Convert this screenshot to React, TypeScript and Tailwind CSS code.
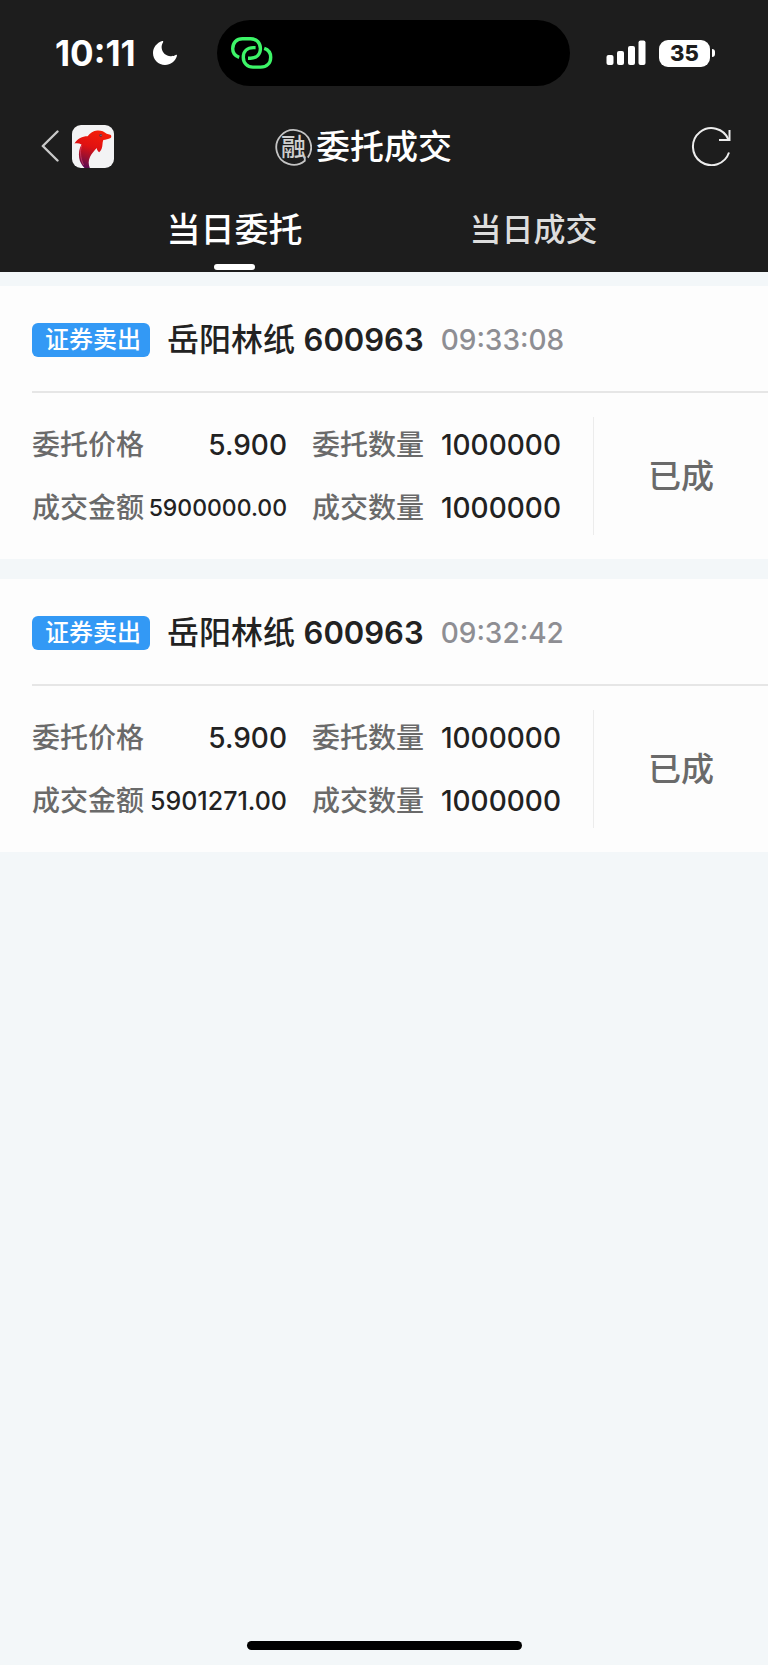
import React, { useState } from "react";

type Order = {
  side: string;
  name: string;
  code: string;
  time: string;
  price: string;
  amount: string;
  orderQty: string;
  dealQty: string;
  status: string;
};

const orders: Order[] = [
  {
    side: "证券卖出",
    name: "岳阳林纸",
    code: "600963",
    time: "09:33:08",
    price: "5.900",
    amount: "5900000.00",
    orderQty: "1000000",
    dealQty: "1000000",
    status: "已成",
  },
  {
    side: "证券卖出",
    name: "岳阳林纸",
    code: "600963",
    time: "09:32:42",
    price: "5.900",
    amount: "5901271.00",
    orderQty: "1000000",
    dealQty: "1000000",
    status: "已成",
  },
];

const tabs = ["当日委托", "当日成交"];

const StatusBar = () => (
  <div className="relative flex h-[106px] items-center justify-between pl-[55px] pr-[53px]">
    <div className="flex items-center gap-4">
      <span className="text-[35px] leading-[40px] font-bold">10:11</span>
      <svg width="26" height="26" viewBox="0 0 26 26" fill="#fff">
        <path d="M10.2 1.1C11 .8 11.6 1.5 11.1 2.3C9.9 4.2 9.4 6.1 9.7 8.3C10.4 13 14 16.1 18.6 16.2C20.4 16.3 22.2 15.8 23.7 15C24.5 14.6 25.2 15.2 24.9 16C23.2 21.4 18.6 25 13 25C6.3 25 1 19.8 1 13.1C1 7.6 4.8 2.9 10.2 1.1Z" />
      </svg>
    </div>

    {/* dynamic island */}
    <div className="absolute left-[217px] right-[198px] top-5 flex h-[66px] items-center rounded-full bg-black pl-[13px]">
      <svg width="43" height="34" viewBox="0 0 43 34" fill="none" stroke="#3df568" strokeWidth="3.4">
        <path d="M9.2 21.4C5.2 20 2.7 16.8 2.7 12.8C2.7 6.8 6.6 2.7 12.5 2.7H20.5C26.6 2.7 30.4 6.8 30.4 12.4C30.4 18.3 26.5 22.2 20.5 22.2H18" />
        <path d="M25.6 11.6H23.3C17.3 11.6 13.3 15.4 13.3 21.2C13.3 27 17.3 31.1 23 31.1H30.6C36.7 31.1 40.7 27.2 40.7 21.2C40.7 17 38.2 13.6 34.2 12.3" />
      </svg>
    </div>

    <div className="flex items-center gap-3">
      <svg width="41" height="26" viewBox="0 0 41 26" fill="#fff">
        <rect x="0.5" y="15" width="7" height="10" rx="2" />
        <rect x="11" y="11" width="7" height="14" rx="2" />
        <rect x="22" y="6" width="7" height="19" rx="2" />
        <rect x="32.5" y="0.5" width="7" height="24.5" rx="2" />
      </svg>
      <div className="flex items-center gap-0.5">
        <span className="flex h-[27px] w-[51px] items-center justify-center rounded-[9px] bg-white text-[22px] leading-[27px] font-extrabold text-[#1d1d1d]">
          35
        </span>
        <span className="h-2 w-[3px] rounded-r-full bg-white" />
      </div>
    </div>
  </div>
);

const DolphinLogo = () => (
  <svg width="42" height="43" viewBox="0 0 42 43">
    <defs>
      <linearGradient id="body" x1="0.65" y1="0" x2="0.35" y2="1">
        <stop offset="0" stopColor="#f51d08" />
        <stop offset="0.45" stopColor="#e01212" />
        <stop offset="0.75" stopColor="#9a1030" />
        <stop offset="1" stopColor="#5c0a50" />
      </linearGradient>
    </defs>
    <rect width="42" height="43" rx="9" fill="#f3f3f4" />
    <path
      d="M17.8 43C16.4 39.5 16.2 35.6 18 32C19.4 29 21.6 26.6 24.6 23C25.1 25 25.9 26.4 27.2 27.3C29.3 25.6 30.3 22.6 30.5 19.2C30.6 17.6 30.8 16.3 31.3 15C33.6 14.6 36.4 14.1 38.6 12.9C39.7 12 39.5 10.2 38.3 9.7L34.7 8.8C32.2 6.4 28.6 5.2 25.3 5.5C21.3 5.8 18.2 8 15.6 11.3C10.8 11.2 5.5 13.2 2.5 18.6C4.8 18 7.3 18.3 9.5 19.4C7.3 23 6.4 28 7.2 33C7.8 36.6 9.7 40 12.5 43Z"
      fill="url(#body)"
    />
    <path d="M9.8 20.5C7.8 25 7.9 32.5 11.5 40" fill="none" stroke="#e0527a" strokeWidth="0.6" />
    <circle cx="28.7" cy="10.5" r="1.4" fill="#6b2b3d" />
    <circle cx="29" cy="10.2" r="0.5" fill="#a9b4bd" />
  </svg>
);

// ring left open at the lower right, with a short tail
const MarginBadge = () => (
  <span className="relative flex size-[37px] items-center justify-center text-[25px] leading-[25px] text-[#d0d0d0]">
    <svg className="absolute inset-0" width="37" height="37" viewBox="0 0 37 37" fill="none" stroke="#c4c4c4" strokeWidth="1.8">
      <path d="M32.8 28.6A17.4 17.4 0 1 0 29.8 31.8V27.5" />
    </svg>
    融
  </span>
);

const NavBar = () => (
  <div className="grid h-20 grid-cols-[1fr_auto_1fr] items-center pl-10 pr-[37px]">
    <div className="flex items-center gap-3">
      <button type="button" aria-label="返回">
        <svg width="20" height="32" viewBox="0 0 20 32" fill="none" stroke="#c9c9c9" strokeWidth="2.4" strokeLinecap="round" strokeLinejoin="round">
          <path d="M17.5 1.5L2.8 16L17.5 30.5" />
        </svg>
      </button>
      <DolphinLogo />
    </div>
    <h1 className="flex items-center gap-1 pt-0.5 pr-11 text-[34px] leading-[44px] font-medium">
      <MarginBadge />
      委托成交
    </h1>
    <button type="button" aria-label="刷新" className="justify-self-end">
      <svg width="40" height="40" viewBox="0 0 40 40" fill="none" stroke="#ececec" strokeWidth="2">
        <path d="M38 26.5A18.5 18.5 0 1 1 37.5 13.5" />
        <path d="M38.5 4V14H28" />
      </svg>
    </button>
  </div>
);

const Field = ({ label, value, small }: { label: string; value: string; small?: string }) => (
  <div className="flex items-center justify-between whitespace-nowrap">
    <dt className="text-[28px] leading-[40px] font-medium text-[#6a6a6a]">{label}</dt>
    <dd className={`leading-[40px] font-medium text-[#222222] ${small ? small : "text-[28px]"}`}>
      {value}
    </dd>
  </div>
);

// amounts shrink to stay on one line, narrow digits leave room for a bigger size
const amountSize = (amount: string) => {
  const ones = amount.split("1").length - 1;
  return ones > 1 ? "text-[25px]" : "text-[23px]";
};

const OrderCard = ({ order }: { order: Order }) => (
  <li className="bg-[#fdfdfd] pl-8">
    <div className="flex h-[107px] items-center border-b-2 border-[#e6e6e6] pt-0.5">
      <span className="rounded-md bg-[#3399f5] pl-[13px] pr-[9px] text-[24px] leading-[34px] font-medium text-white">
        {order.side}
      </span>
      <span className="ml-[17px] text-[32px] leading-[40px] font-medium text-[#222222]">
        {order.name} <span className="text-[31px] font-semibold">{order.code}</span>
      </span>
      <time className="ml-[17px] text-[28px] leading-[40px] font-medium text-[#8e8e93]">
        {order.time}
      </time>
    </div>
    <div className="flex h-[166px] items-center">
      <dl className="grid flex-1 grid-cols-[255px_1fr] gap-x-[25px] gap-y-[23px] pr-8">
        <Field label="委托价格" value={order.price} />
        <Field label="委托数量" value={order.orderQty} />
        <Field label="成交金额" value={order.amount} small={amountSize(order.amount)} />
        <Field label="成交数量" value={order.dealQty} />
      </dl>
      <div className="flex h-[118px] w-[175px] items-center justify-center border-l border-[#ececec] text-[33px] leading-[44px] font-medium text-[#6a6a6a]">
        {order.status}
      </div>
    </div>
  </li>
);

const App = () => {
  const [active, setActive] = useState<number>(0);

  return (
    <div className="flex min-h-screen flex-col bg-[#f3f7f9] font-['Inter','Noto_Sans_CJK_SC',sans-serif]">
      <header className="bg-[#1d1d1d] text-white">
        <StatusBar />
        <NavBar />
        <div role="tablist" className="grid h-[86px] grid-cols-2 px-[85px]">
          {tabs.map((tab, i) => (
            <button
              key={tab}
              type="button"
              role="tab"
              aria-selected={active === i}
              onClick={() => setActive(i)}
              className="flex flex-col items-center justify-between pt-[22px] pb-0.5"
            >
              <span
                className={
                  active === i
                    ? "text-[34px] leading-[44px] font-medium"
                    : "text-[32px] leading-[44px] font-medium text-[#dddddd]"
                }
              >
                {tab}
              </span>
              {active === i && <span className="h-1.5 w-[41px] rounded-full bg-white" />}
            </button>
          ))}
        </div>
      </header>

      <main className="flex-1 pt-3.5">
        <ul className="flex flex-col gap-5">
          {orders.map((order) => (
            <OrderCard key={order.time} order={order} />
          ))}
        </ul>
      </main>

      <footer className="flex justify-center pb-[15px]">
        <span className="h-[9px] w-[275px] rounded-full bg-black" />
      </footer>
    </div>
  );
};

export default App;
